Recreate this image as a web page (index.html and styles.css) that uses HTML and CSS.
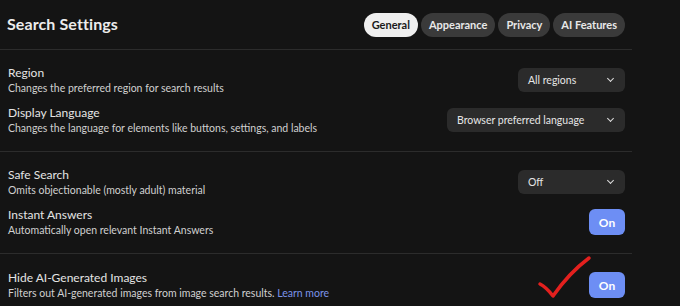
FILE: index.html
```html
<!DOCTYPE html>
<html lang="en">
<head>
  <meta charset="UTF-8" />
  <meta name="viewport" content="width=device-width, initial-scale=1.0"/>
  <title>Search Settings</title>
  <link rel="stylesheet" href="styles.css">
</head>
<body>

  <div class="settings">
    <div class="header">
      <h2>Search Settings</h2>
      <div class="tabs">
        <span class="tab active">General</span>
        <span class="tab">Appearance</span>
        <span class="tab">Privacy</span>
        <span class="tab">AI Features</span>
      </div>
    </div>

    <div class="section">
      <div class="row">
        <div class="info">
          <div class="label">Region</div>
          <div class="desc">Changes the preferred region for search results</div>
        </div>
        <div class="select small">All regions <span class="chev"></span></div>
      </div>
      <div class="row">
        <div class="info">
          <div class="label">Display Language</div>
          <div class="desc">Changes the language for elements like buttons, settings, and labels</div>
        </div>
        <div class="select wide">Browser preferred language <span class="chev"></span></div>
      </div>
    </div>

    <div class="section">
      <div class="row">
        <div class="info">
          <div class="label">Safe Search</div>
          <div class="desc">Omits objectionable (mostly adult) material</div>
        </div>
        <div class="select small">Off <span class="chev"></span></div>
      </div>
      <div class="row">
        <div class="info">
          <div class="label">Instant Answers</div>
          <div class="desc">Automatically open relevant Instant Answers</div>
        </div>
        <button class="toggle">On</button>
      </div>
    </div>

    <div class="section last">
      <div class="row">
        <div class="info">
          <div class="label">Hide AI-Generated Images</div>
          <div class="desc">Filters out AI-generated images from image search results. <a href="#">Learn more</a></div>
        </div>
        <div class="toggle-wrap">
          <!-- hand-drawn tick over the row -->
          <svg class="check" width="60" height="50" viewBox="0 0 60 50">
            <path d="M5 31 Q11 34 18 43 Q34 20 54 5" fill="none" stroke="#e3201e" stroke-width="3.5" stroke-linecap="round" stroke-linejoin="round"/>
          </svg>
          <button class="toggle">On</button>
        </div>
      </div>
    </div>
  </div>

</body>
</html>
```

FILE: styles.css
```css
body {
  margin: 0;
  background: #141414;
  font-family: Lato, "Open Sans", sans-serif;
  color: #e6e6e6;
}

.settings {
  width: 632px;
}

.header {
  display: flex;
  justify-content: space-between;
  align-items: center;
  height: 49px;
  padding: 0 7px 0 7px;
  border-bottom: 1px solid #2c2c2c;
}

h2 {
  margin: -3px 0 0 0;
  font-size: 16px;
  font-weight: 700;
  color: #ececec;
  letter-spacing: 0.1px;
}

.tabs {
  display: flex;
  gap: 3px;
  margin-top: 1px;
}

.tab {
  height: 24px;
  line-height: 24px;
  padding: 0 8px;
  border-radius: 12px;
  background: #3a3a3a;
  font-size: 11px;
  font-weight: 700;
  color: #e8e8e8;
}

.tab.active {
  background: #efefef;
  color: #1a1a1a;
}

.section {
  padding: 10px 7px 11px 8px;
  border-bottom: 1px solid #2c2c2c;
}

.section.last {
  border-bottom: none;
  padding-top: 11px;
}

.row {
  display: flex;
  justify-content: space-between;
  align-items: center;
  height: 40px;
}

.label {
  font-size: 12px;
  color: #e4e4e4;
  line-height: 15px;
}

.desc {
  font-size: 10.5px;
  color: #d0d0d0;
  line-height: 14px;
  margin-top: 1px;
}

.desc a {
  color: #7b93e8;
  text-decoration: none;
}

.select {
  display: flex;
  align-items: center;
  justify-content: space-between;
  height: 24px;
  padding: 0 10px;
  box-sizing: border-box;
  background: #2b2b2b;
  border-radius: 6px;
  font-size: 10.5px;
  color: #e6e6e6;
}

.select.small {
  width: 107px;
}

.select.wide {
  width: 178px;
}

.chev {
  width: 4px;
  height: 4px;
  border-right: 1.5px solid #ddd;
  border-bottom: 1.5px solid #ddd;
  transform: rotate(45deg);
  margin-top: -3px;
  margin-right: 2px;
}

.toggle-wrap {
  position: relative;
}

.check {
  position: absolute;
  left: -54px;
  top: -19px;
}

.toggle {
  display: block;
  width: 36px;
  height: 26px;
  border: none;
  border-radius: 6px;
  background: #6d8ef4;
  color: #fff;
  font-family: Lato, sans-serif;
  font-size: 12px;
  font-weight: 700;
  padding: 0;
}
```
